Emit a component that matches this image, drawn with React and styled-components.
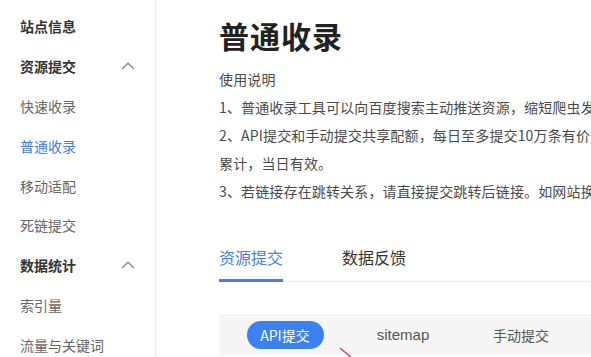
import React from "react";
import styled, { createGlobalStyle } from "styled-components";

const Global = createGlobalStyle`
  html, body { margin: 0; padding: 0; background: #fff; }
  body { font-family: "Noto Sans CJK SC", "Noto Sans", sans-serif; }
`;

const Page = styled.div`
  display: flex;
  width: 591px;
  height: 357px;
  overflow: hidden;
  background: #fff;
`;

const Sidebar = styled.nav`
  flex: 0 0 156px;
  border-right: 1px solid #ebebeb;
  padding-top: 6px;
  box-sizing: border-box;
`;

const NavItem = styled.div`
  display: flex;
  align-items: center;
  justify-content: space-between;
  height: 39.9px;
  padding: 0 20px 0 20px;
  font-size: 14px;
  line-height: 20px;
  font-weight: ${(p) => (p.$group ? 700 : 400)};
  color: ${(p) => (p.$active ? "#3d7de6" : p.$group ? "#333" : "#666")};
`;

const Chevron = styled.svg`
  width: 14px;
  height: 8px;
`;

const Main = styled.main`
  flex: 1;
  min-width: 0;
  padding-left: 63px;
  overflow: hidden;
  position: relative;
`;

const Title = styled.h1`
  margin: 15px 0 0;
  font-size: 30px;
  line-height: 40px;
  font-weight: 700;
  color: #222;
  letter-spacing: 1px;
`;

const Intro = styled.div`
  margin-top: 10px;
  font-size: 14px;
  line-height: 28px;
  color: #4a4a4a;
`;

const Line = styled.div`
  white-space: nowrap;
  letter-spacing: 0.15px;
`;

const Tabs = styled.div`
  display: flex;
  gap: 59px;
  margin-top: 40px;
  border-bottom: 1px solid #eeeeee;
`;

const Tab = styled.div`
  font-size: 16px;
  line-height: 24px;
  padding-bottom: 10px;
  color: ${(p) => (p.$active ? "#4a7fd6" : "#333")};
  border-bottom: 3px solid ${(p) => (p.$active ? "#4a7fd6" : "transparent")};
  margin-bottom: -1px;
  white-space: nowrap;
`;

const SubBar = styled.div`
  display: flex;
  align-items: center;
  margin-top: 32px;
  height: 41px;
  padding-left: 7px;
  background: #f5f5f5;
`;

const SubItem = styled.div`
  flex: 0 0 118px;
  display: flex;
  justify-content: center;
  align-items: center;
  font-size: 14px;
  color: #555;
  white-space: nowrap;
`;

const Pill = styled.span`
  display: inline-flex;
  align-items: center;
  justify-content: center;
  width: 77px;
  height: 28px;
  border-radius: 14px;
  background: #3b82f0;
  color: #fff;
`;

const Latin = styled.span`
  font-family: "Liberation Sans", Arial, sans-serif;
  font-size: 15px;
`;

const Arrow = styled.svg`
  position: absolute;
  left: 183px;
  top: 346px;
  width: 14px;
  height: 12px;
`;

const ChevronUp = () => (
  <Chevron viewBox="0 0 14 8">
    <polyline points="1,7 7,1.2 13,7" fill="none" stroke="#8a8a8a" strokeWidth="1.4" />
  </Chevron>
);

export default function App() {
  return (
    <>
      <Global />
      <Page>
        <Sidebar>
          <NavItem $group>站点信息</NavItem>
          <NavItem $group>
            资源提交
            <ChevronUp />
          </NavItem>
          <NavItem>快速收录</NavItem>
          <NavItem $active>普通收录</NavItem>
          <NavItem>移动适配</NavItem>
          <NavItem>死链提交</NavItem>
          <NavItem $group>
            数据统计
            <ChevronUp />
          </NavItem>
          <NavItem>索引量</NavItem>
          <NavItem>流量与关键词</NavItem>
        </Sidebar>
        <Main>
          <Title>普通收录</Title>
          <Intro>
            <Line>使用说明</Line>
            <Line>1、普通收录工具可以向百度搜索主动推送资源，缩短爬虫发现网站链接的时间。</Line>
            <Line>2、API提交和手动提交共享配额，每日至多提交10万条有价值的内容，sitemap提交配额不与其他方式</Line>
            <Line>累计，当日有效。</Line>
            <Line>3、若链接存在跳转关系，请直接提交跳转后链接。如网站换域名，需提交新域名资源。</Line>
          </Intro>
          <Tabs>
            <Tab $active>资源提交</Tab>
            <Tab>数据反馈</Tab>
          </Tabs>
          <SubBar>
            <SubItem>
              <Pill>API提交</Pill>
            </SubItem>
            <SubItem>
              <Latin>sitemap</Latin>
            </SubItem>
            <SubItem>手动提交</SubItem>
          </SubBar>
          <Arrow viewBox="0 0 14 12">
            <line x1="1" y1="2" x2="12" y2="11" stroke="#e0405a" strokeWidth="1.6" />
          </Arrow>
        </Main>
      </Page>
    </>
  );
}
